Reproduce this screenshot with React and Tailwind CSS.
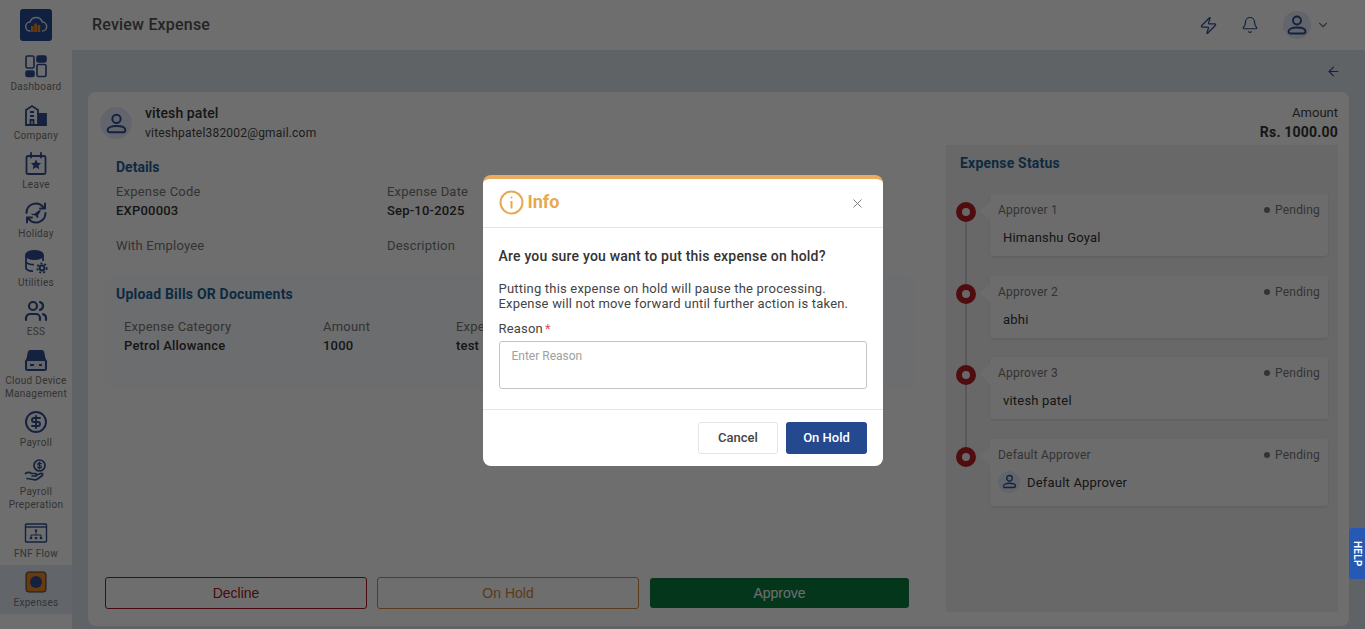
import React from 'react';
import { ArrowLeft, Bell, ChevronDown, Zap, X, Users, CircleDollarSign } from 'lucide-react';

const navy = '#2f4f92';

// Sidebar drawings
const DashboardIcon = () => (
  <svg width="24" height="24" viewBox="0 0 24 24" fill="none" stroke={navy} strokeWidth="1.6">
    <rect x="2" y="2" width="8" height="12" rx="1.5" />
    <rect x="13" y="2" width="9" height="6" rx="1.5" fill={navy} />
    <rect x="2" y="17" width="8" height="5.5" rx="1.5" fill={navy} />
    <rect x="13" y="10.5" width="9" height="12" rx="1.5" />
  </svg>
);

const CompanyIcon = () => (
  <svg width="24" height="24" viewBox="0 0 24 24" fill="none" stroke={navy} strokeWidth="1.8">
    <path d="M2 22V7l6-4 6 4v15z" />
    <path d="M15 11h7v11h-7z" fill={navy} />
    <path d="M6 9h4M6 13h4M6.5 22v-5h3v5" />
  </svg>
);

const LeaveIcon = () => (
  <svg width="24" height="24" viewBox="0 0 24 24" fill="none" stroke={navy} strokeWidth="1.8">
    <rect x="2.5" y="4" width="19" height="18" rx="1.5" />
    <path d="M7 1v4.500M17 1v4.500" strokeLinecap="round" />
    <path d="M12 7.500l1.600 3.300 3.600.4-2.700 2.400.8 3.600-3.300-1.900-3.300 1.900.8-3.600-2.700-2.400 3.600-.4z" fill={navy} stroke="none" />
  </svg>
);

const HolidayIcon = () => (
  <svg width="24" height="24" viewBox="0 0 24 24" fill="none" stroke={navy} strokeWidth="2">
    <path d="M2.500 12a9.500 9.500 0 0 1 16.500-6.400L21 7.500M21 2.500v5h-5" strokeLinecap="round" strokeLinejoin="round" />
    <path d="M21.500 12A9.500 9.500 0 0 1 5 18.400L3 16.500M3 21.500v-5h5" strokeLinecap="round" strokeLinejoin="round" />
    <path d="M7 12.500l3 .5 5.500-4 1.500.5-3 5 .5 2-1.500.5-1.500-2.500-3.500-.5z" fill={navy} stroke="none" />
  </svg>
);

const UtilitiesIcon = () => (
  <svg width="24" height="24" viewBox="0 0 24 24" fill="none" stroke={navy} strokeWidth="1.8">
    <ellipse cx="10.500" cy="5" rx="8.500" ry="4" fill={navy} />
    <path d="M2 5v13c0 1.800 3.500 3 7 3.200M19 5v6" />
    <path d="M2 11.500c0 1.800 3.800 3.200 8 3.200" />
    <circle cx="18" cy="18" r="2.400" strokeWidth="2" />
    <circle cx="18" cy="18" r="4.700" strokeWidth="1.800" strokeDasharray="2 2" />
  </svg>
);

const CloudDeviceIcon = () => (
  <svg width="24" height="24" viewBox="0 0 24 24" fill="none">
    <path d="M2 13l1.800-9A2.500 2.500 0 0 1 6.200 2h11.600a2.500 2.500 0 0 1 2.400 2l1.800 9z" fill={navy} />
    <rect x="2" y="12" width="20" height="10" rx="1.500" fill="#e9edf4" stroke={navy} strokeWidth="2" />
    <path d="M6 17h4M15 17h3" stroke={navy} strokeWidth="2" />
  </svg>
);

const PayrollHandIcon = () => (
  <svg width="24" height="24" viewBox="0 0 24 24" fill="none" stroke={navy} strokeWidth="1.700" strokeLinecap="round" strokeLinejoin="round">
    <circle cx="15.500" cy="6.500" r="5.500" />
    <path d="M17.300 4.800c-.4-.6-1-.9-1.800-.9-1 0-1.800.5-1.800 1.300 0 1.800 3.700.8 3.700 2.600 0 .8-.8 1.300-1.900 1.300-.8 0-1.500-.3-1.900-.9M15.500 3v7" strokeWidth="1.200" />
    <path d="M1.500 14.500c2-1.500 4-1.500 6 0h4c1.500 0 1.500 2.500 0 2.500H8" />
    <path d="M11.500 16.500l5-2c2-.6 3 1.200 1.500 2.300l-4.500 3.200c-1.500 1-3 1-4.500.5L3 19.500" />
  </svg>
);

const FlowIcon = () => (
  <svg width="24" height="24" viewBox="0 0 24 24" fill="none" stroke={navy} strokeWidth="1.400">
    <rect x="1.500" y="3" width="21" height="18" rx="1" />
    <path d="M1.500 6h21" />
    <path d="M12 9v5M7 16.500v-2.500h10v2.500" strokeWidth="1" />
    <rect x="10.800" y="8.500" width="2.400" height="2.200" fill={navy} stroke="none" />
    <rect x="5.800" y="16" width="2.400" height="2.200" fill={navy} stroke="none" />
    <rect x="10.800" y="16" width="2.400" height="2.200" fill={navy} stroke="none" />
    <rect x="15.800" y="16" width="2.400" height="2.200" fill={navy} stroke="none" />
  </svg>
);

const ExpensesIcon = () => (
  <svg width="24" height="24" viewBox="0 0 24 24">
    <rect x="2" y="2" width="20" height="20" rx="2.500" fill="#f08a24" stroke="#3a3a3a" strokeWidth="1" />
    <circle cx="12" cy="12" r="6" fill="#2f4f92" />
  </svg>
);

const LogoIcon = () => (
  <svg width="24" height="24" viewBox="0 0 24 24" fill="none">
    <path d="M6.500 18a4.500 4.500 0 0 1-.5-9 6.500 6.500 0 0 1 12.300 0 4.500 4.500 0 0 1-.3 9" stroke="#dfe6f2" strokeWidth="1.500" />
    <rect x="7" y="13" width="2.600" height="6" fill="#f08a24" />
    <rect x="10.300" y="10.500" width="2.600" height="8.500" fill="#f08a24" />
    <rect x="13.600" y="12" width="2.600" height="7" fill="#f08a24" />
  </svg>
);

const PersonIcon = ({ size }) => (
  <svg width={size} height={size} viewBox="0 0 24 24" fill="none" stroke={navy} strokeWidth="1.900">
    <circle cx="12" cy="7.500" r="4" />
    <path d="M3.500 18.500c0-2.600 3.800-4 8.500-4s8.500 1.400 8.500 4c0 1.300-1 2-2.200 2H5.700c-1.200 0-2.200-.7-2.200-2z" />
  </svg>
);

const navItems = [
  { label: ['Dashboard'], icon: <DashboardIcon /> },
  { label: ['Company'], icon: <CompanyIcon /> },
  { label: ['Leave'], icon: <LeaveIcon /> },
  { label: ['Holiday'], icon: <HolidayIcon /> },
  { label: ['Utilities'], icon: <UtilitiesIcon /> },
  { label: ['ESS'], icon: <Users size={24} color={navy} strokeWidth={2.2} /> },
  { label: ['Cloud Device', 'Management'], icon: <CloudDeviceIcon /> },
  { label: ['Payroll'], icon: <CircleDollarSign size={24} color={navy} strokeWidth={1.9} /> },
  { label: ['Payroll', 'Preperation'], icon: <PayrollHandIcon /> },
  { label: ['FNF Flow'], icon: <FlowIcon /> },
  { label: ['Expenses'], icon: <ExpensesIcon />, active: true },
];

const approvers = [
  { title: 'Approver 1', name: 'Himanshu Goyal', h: 'h-[62px]' },
  { title: 'Approver 2', name: 'abhi', h: 'h-[62px]' },
  { title: 'Approver 3', name: 'vitesh patel', h: 'h-[62px]' },
  { title: 'Default Approver', name: 'Default Approver', h: 'h-[67px]', avatar: true },
];

const Avatar = ({ box, size }) => (
  <div className={`${box} shrink-0 rounded-full bg-[#e3ebf7] flex items-center justify-center`}>
    <PersonIcon size={size} />
  </div>
);

const Field = ({ label, value, className }) => (
  <div className={className}>
    <div className="text-[13px] leading-[18px] text-[#777] tracking-[0.2px]">{label}</div>
    {value && <div className="text-[13px] leading-[20px] font-medium text-[#333] tracking-[0.2px]">{value}</div>}
  </div>
);

export default function App() {
  return (
    <div className="relative h-screen overflow-hidden flex bg-[#dfe6ea] text-[#333] font-['Roboto',sans-serif]">
      {/* Sidebar */}
      <aside className="w-[72px] shrink-0 bg-white flex flex-col items-stretch">
        <div className="h-[49px] flex justify-center pt-[9px]">
          <div className="w-8 h-8 rounded-[3px] bg-[#274b94] flex items-center justify-center">
            <LogoIcon />
          </div>
        </div>
        {navItems.map((item) => (
          <div
            key={item.label[0] + item.label.length}
            className={`flex flex-col items-center pt-[5px] pb-[5px] gap-[2px] ${item.active ? 'bg-[#e4edf8]' : ''}`}
          >
            <div className="w-6 h-6">{item.icon}</div>
            <div className="text-[10px] leading-[13px] text-center text-[#777] tracking-[0.3px] whitespace-nowrap">
              {item.label.map((line) => (
                <div key={line}>{line}</div>
              ))}
            </div>
          </div>
        ))}
      </aside>

      <div className="flex-1 min-w-0 flex flex-col">
        {/* Header */}
        <header className="h-[50px] shrink-0 bg-white flex items-center pl-5 pr-[35px]">
          <h1 className="text-base font-medium text-[#555] tracking-[0.2px]">Review Expense</h1>
          <div className="ml-auto flex items-center">
            <Zap size={19} color={navy} strokeWidth={1.6} />
            <Bell size={18} color={navy} strokeWidth={1.6} className="ml-[23px]" />
            <div className="ml-[24px]">
              <Avatar box="w-7 h-7" size={24} />
            </div>
            <ChevronDown size={14} color="#777" className="ml-[5px]" />
          </div>
        </header>

        {/* Content */}
        <main className="flex-1 min-h-0 pl-4 pr-4 flex flex-col">
          <div className="h-[42px] shrink-0 flex items-center justify-end pr-2">
            <ArrowLeft size={15} color={navy} strokeWidth={1.8} />
          </div>
          <section className="h-[534px] shrink-0 bg-white rounded-lg flex flex-col">
            <div className="h-[53px] shrink-0 flex items-center pl-3 pr-[11px]">
              <Avatar box="w-8 h-8 mt-[9px]" size={25} />
              <div className="ml-[13px] mt-[9px]">
                <div className="text-sm leading-[20px] font-medium text-[#333] tracking-[0.1px]">vitesh patel</div>
                <div className="text-xs leading-[20px] text-[#444] tracking-[0.2px]">viteshpatel382002@gmail.com</div>
              </div>
              <div className="ml-auto text-right mt-[7px]">
                <div className="text-[13px] leading-[19px] text-[#444]">Amount</div>
                <div className="text-sm leading-[20px] font-bold text-[#333] tracking-[0.2px]">Rs. 1000.00</div>
              </div>
            </div>

            <div className="flex-1 min-h-0 flex pb-[14px]">
              <div className="w-[858px] shrink-0 flex flex-col">
                <div className="pl-7 pt-[13px]">
                  <h2 className="text-sm leading-[18px] font-bold text-[#1c6198]">Details</h2>
                  <div className="mt-[7px] grid grid-cols-[271px_1fr] gap-y-[16px]">
                    <Field label="Expense Code" value="EXP00003" />
                    <Field label="Expense Date" value="Sep-10-2025" />
                    <Field label="With Employee" />
                    <Field label="Description" />
                  </div>
                </div>
                <div className="ml-[17px] mt-[21px] w-[810px] h-[113px] bg-[#fbfcfe] rounded-md pl-[11px] pt-[9px]">
                  <h2 className="text-sm leading-[18px] font-bold text-[#1c6198] tracking-[0.2px]">Upload Bills OR Documents</h2>
                  <div className="mt-[15px] pl-2 grid grid-cols-[199px_133px_1fr]">
                    <Field label="Expense Category" value="Petrol Allowance" />
                    <Field label="Amount" value="1000" />
                    <Field label="Expense" value="test" />
                  </div>
                </div>
                <div className="mt-auto pl-[17px] pb-[3px] flex items-center">
                  <button className="w-[262px] h-8 pb-[1px] rounded-[3px] border border-[#a81822] text-[#a81822] text-sm font-['Liberation_Sans',sans-serif]">Decline</button>
                  <button className="ml-[10px] w-[262px] h-8 pb-[1px] rounded-[3px] border border-[#d08a3c] text-[#d08a3c] text-sm font-['Liberation_Sans',sans-serif]">On Hold</button>
                  <button className="ml-[11px] w-[259px] h-[30px] pb-[1px] rounded-[3px] bg-[#0b7d42] text-white text-sm font-['Liberation_Sans',sans-serif]">Approve</button>
                </div>
              </div>

              {/* Expense status */}
              <div className="w-[392px] shrink-0 bg-[#f2f2f2] pl-[14px] pr-[10px] pt-[9px]">
                <h2 className="text-sm leading-[18px] font-bold text-[#1c6198] tracking-[0.2px]">Expense Status</h2>
                <div className="relative mt-[22px] flex flex-col gap-[19.5px]">
                  <div className="absolute left-[5px] top-[18px] bottom-[50px] w-[2px] bg-[#ccc]" />
                  {approvers.map((a) => (
                    <div key={a.title} className="relative pl-[30px]">
                      <div className="absolute left-[-4px] top-[8px] w-5 h-5 rounded-full border-[6px] border-[#b81f24] bg-[#f2f2f2]" />
                      <div className={`relative ${a.h} bg-[#fbfbfb] rounded-[3px] shadow-[0_1px_3px_rgba(0,0,0,0.12)] pl-2 pr-2 pt-[7px]`}>
                        <div className="absolute left-[-7px] top-[10px] w-[14px] h-[14px] rotate-45 bg-[#fbfbfb]" />
                        <div className="relative flex items-center justify-between text-xs leading-[18px] text-[#777] tracking-[0.2px]">
                          <span>{a.title}</span>
                          <span className="flex items-center">
                            <span className="w-[6px] h-[6px] rounded-full bg-[#777] mr-[5px]" />
                            Pending
                          </span>
                        </div>
                        {a.avatar ? (
                          <div className="relative flex items-start mt-[2px]">
                            <Avatar box="w-[22px] h-[22px] mt-[5px]" size={17} />
                            <span className="ml-[7px] mt-[7px] text-[13px] leading-[20px] text-[#333] tracking-[0.2px]">{a.name}</span>
                          </div>
                        ) : (
                          <div className="relative mt-[9px] pl-[5px] text-[13px] leading-[20px] text-[#333] tracking-[0.2px]">{a.name}</div>
                        )}
                      </div>
                    </div>
                  ))}
                </div>
              </div>
            </div>
          </section>
        </main>
      </div>

      {/* Dim layer and dialog */}
      <div className="absolute inset-0 bg-black/[0.57]" />
      <div className="absolute inset-0 flex items-start justify-center pt-[175px]">
        <div className="w-[400px] h-[291px] bg-white rounded-lg border-t-4 border-[#e9ac60] flex flex-col">
          <div className="h-[49px] shrink-0 flex items-center pl-4 pr-5 border-b border-[#e4e4e4]">
            <svg width="25" height="25" viewBox="0 0 25 25" fill="none" stroke="#e8a850" strokeWidth="2" className="mt-[-2px]">
              <circle cx="12.500" cy="12.500" r="11" />
              <path d="M12.500 11v7.500" />
              <circle cx="12.500" cy="7.500" r="1" fill="#e8a850" stroke="none" />
            </svg>
            <span className="ml-[4px] mt-[-3px] text-lg font-bold text-[#e8a850]">Info</span>
            <X size={15} color="#777" strokeWidth={1.5} className="ml-auto mr-[-2px]" />
          </div>
          <div className="flex-1 px-4 pt-[18px]">
            <div className="text-sm leading-[20px] font-medium text-[#333] tracking-[0.2px]">Are you sure you want to put this expense on hold?</div>
            <p className="mt-[15px] text-[13px] leading-[15px] text-[#444] tracking-[0.2px]">
              Putting this expense on hold will pause the processing.
              <br />
              Expense will not move forward until further action is taken.
            </p>
            <div className="mt-[9px] text-[13px] leading-[18px] text-[#444] tracking-[0.2px]">
              Reason<span className="ml-[2px] text-[#e0505a]">*</span>
            </div>
            <textarea
              placeholder="Enter Reason"
              className="mt-[3px] block w-full h-[48px] rounded-[3px] border border-[#c4c4c4] px-3 pt-[5px] text-xs leading-[18px] resize-none placeholder:text-[#a0a0a0]"
            />
          </div>
          <div className="h-[57px] shrink-0 border-t border-[#e4e4e4] flex items-center justify-end gap-2 pr-4">
            <button className="w-[80px] h-8 rounded-[3px] border border-[#e4e4e4] text-[13px] font-medium text-[#444] pl-[1px]">Cancel</button>
            <button className="w-[81px] h-8 rounded-[3px] bg-[#24498f] text-[13px] font-medium text-white pl-[1px]">On Hold</button>
          </div>
        </div>
      </div>

      {/* Help tab */}
      <div className="absolute right-0 top-[528px] w-4 h-[51px] rounded-l-[3px] bg-[#2659b4] flex items-center justify-center">
        <span className="[writing-mode:vertical-rl] text-[10px] font-bold text-white tracking-[0.3px]">HELP</span>
      </div>
    </div>
  );
}
